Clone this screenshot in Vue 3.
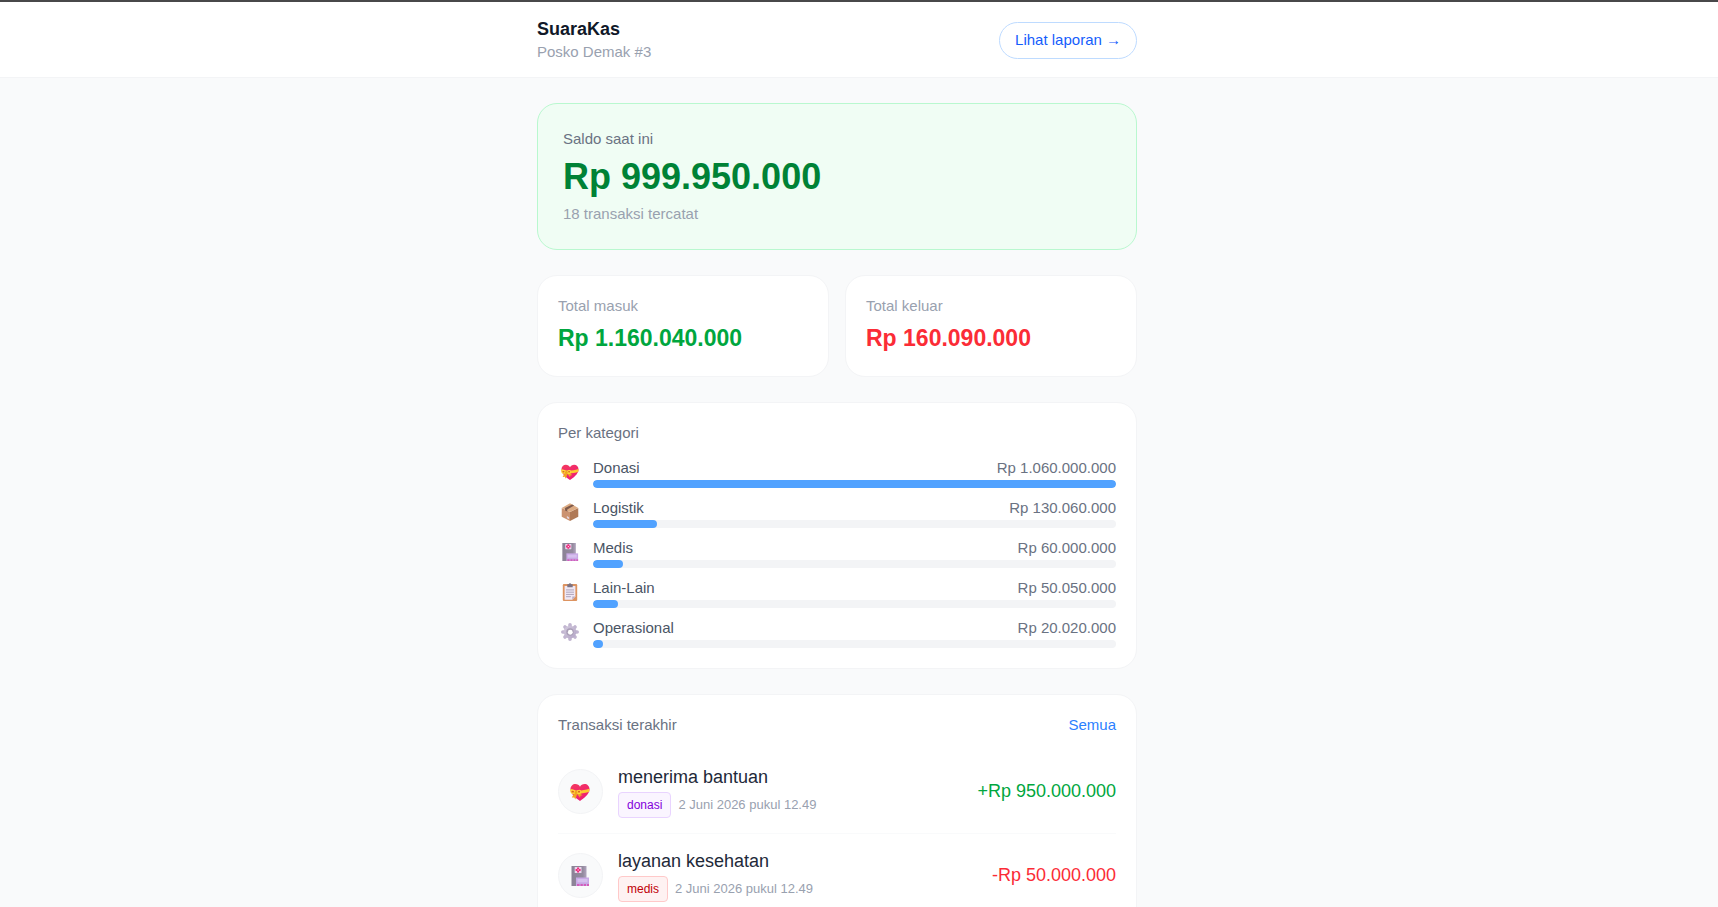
<script setup>
const categories = [
  { name: 'Donasi', icon: 'gift', amount: 1060000000 },
  { name: 'Logistik', icon: 'box', amount: 130060000 },
  { name: 'Medis', icon: 'hospital', amount: 60000000 },
  { name: 'Lain-Lain', icon: 'clipboard', amount: 50050000 },
  { name: 'Operasional', icon: 'gear', amount: 20020000 },
]
const largest = Math.max(...categories.map((c) => c.amount))

const transactions = [
  { title: 'menerima bantuan', tag: 'donasi', icon: 'gift', date: '2 Juni 2026 pukul 12.49', amount: 950000000 },
  { title: 'layanan kesehatan', tag: 'medis', icon: 'hospital', date: '2 Juni 2026 pukul 12.49', amount: -50000000 },
]

const rupiah = (n) => 'Rp ' + String(Math.abs(n)).replace(/\B(?=(\d{3})+$)/g, '.')
const signed = (n) => (n < 0 ? '-' : '+') + rupiah(n)
const share = (n) => (n / largest) * 100 + '%'
</script>

<template>
  <svg class="sprite" aria-hidden="true">
    <defs>
      <linearGradient id="heart-fill" x1="0" y1="0" x2="0.6" y2="1">
        <stop offset="0" stop-color="#f43a5e" />
        <stop offset="1" stop-color="#ee1c76" />
      </linearGradient>
      <linearGradient id="wall-fill" x1="0" y1="0" x2="1" y2="0">
        <stop offset="0" stop-color="#8b8296" />
        <stop offset="0.75" stop-color="#938a9e" />
        <stop offset="1" stop-color="#b0a5bd" />
      </linearGradient>
      <linearGradient id="gear-fill" x1="0" y1="0" x2="1" y2="1">
        <stop offset="0" stop-color="#d3cadd" />
        <stop offset="1" stop-color="#b3a5c6" />
      </linearGradient>
    </defs>
    <symbol id="gift" viewBox="0 0 20 20">
      <path d="M10 19C7 17 .5 12.500 .5 7.300C.5 4 2.800 2 5.400 2C7.500 2 9.200 3.100 10 4.700C10.800 3.100 12.500 2 14.600 2C17.200 2 19.500 4 19.500 7.300C19.500 12.500 13 17 10 19Z" fill="url(#heart-fill)" />
      <path d="M.5 7.300C6 9.300 13 8.800 19.400 6.800L19.300 9.800C14 11.800 6.500 12.300 1.300 10.600Z" fill="#fdc82f" />
      <path d="M4.500 10.500L1.800 15.500L4.300 15.400L5.300 17.400L7.200 12L10 15.800L10.600 13.600L12.600 13.500L8 9.500Z" fill="#f0a321" />
      <path d="M6 9.700C4 6.800 .3 6.600 .2 8.800C.2 12 3.300 13.200 6 10.800C8.500 13.200 11.300 12.400 11.300 9.700C11.200 7 7.800 7 6 9.700Z" fill="#ffd43e" />
      <ellipse cx="2.700" cy="9.700" rx="1.300" ry=".9" fill="#d86722" />
      <ellipse cx="9" cy="9.700" rx="1.200" ry=".9" fill="#d86722" />
      <circle cx="6" cy="10.400" r="1.400" fill="#eba51f" />
    </symbol>
    <symbol id="box" viewBox="0 0 20 20">
      <path d="M.8 5.500L10 10V20L.8 15.200Z" fill="#cb9270" />
      <path d="M19.200 5.500L10 10V20L19.200 15.200Z" fill="#b07a57" />
      <path d="M10 .2L19.200 5.500L10 10L.8 5.500Z" fill="#dcab83" />
      <path d="M4.500 5.600L12.300 1.600L14.600 2.900L7 7.100V9.500L4.500 8.200Z" fill="#7f5a4b" />
      <path d="M6.500 14.500L9 15.700V18L6.500 16.800Z" fill="#e5d4dc" />
    </symbol>
    <symbol id="hospital" viewBox="0 0 20 20">
      <rect x="1.500" y="0" width="15" height="20" fill="url(#wall-fill)" />
      <rect x="4.700" y="1" width="6.800" height="6" rx=".5" fill="#e9d6ec" />
      <path d="M7.100 1.400H9.100V2.900H10.600V5H9.100V6.500H7.100V5H5.600V2.900H7.100Z" fill="#ed287a" />
      <rect x="7.600" y="3.400" width="1.100" height="1.100" fill="#fff" />
      <rect x="6" y="11.500" width="13" height="8.500" fill="#c8a8e5" />
      <rect x="7.500" y="13" width="10" height="3.300" fill="#d6c0ee" />
      <path d="M7 18H9.500V20H7ZM10.500 18H12.800V20H10.500ZM13.800 18H16V20H13.800ZM17 18H19V20H17Z" fill="#d35cba" />
    </symbol>
    <symbol id="clipboard" viewBox="0 0 20 20">
      <rect x="2" y="1.200" width="16" height="18.800" rx="1.200" fill="#dd9461" />
      <path d="M4 3.200H16V15L12.500 18.500H4Z" fill="#efe8f5" />
      <path d="M16 15L12.500 18.500V15Z" fill="#bcaec8" />
      <path d="M7 1.300H8.500A1.600 1.600 0 0 1 11.500 1.300H13V4.800H7Z" fill="#7c7383" />
      <path d="M5.600 7.700H14.400M5.600 10.200H14.400M5.600 12.700H14.400M5.600 15.200H11" stroke="#a99db5" stroke-width="1" />
    </symbol>
    <symbol id="gear" viewBox="0 0 20 20">
      <g stroke="#c1b5d0" stroke-width="4" stroke-linecap="round">
        <path d="M10 2V18M2 10H18M4.400 4.400L15.600 15.600M15.600 4.400L4.400 15.600" />
      </g>
      <circle cx="10" cy="10" r="7" fill="url(#gear-fill)" />
      <circle cx="10" cy="10" r="4.100" fill="#a99eb6" />
      <circle cx="10.300" cy="10.300" r="2.700" fill="#fff" />
    </symbol>
  </svg>

  <div class="page">
    <header class="topbar">
      <div class="column topbar-row">
        <div>
          <h1 class="brand">SuaraKas</h1>
          <p class="muted">Posko Demak #3</p>
        </div>
        <a class="report" href="#laporan">Lihat laporan →</a>
      </div>
    </header>

    <main class="main">
      <div class="column stack">
        <section class="balance">
          <p class="label">Saldo saat ini</p>
          <p class="balance-value">{{ rupiah(999950000) }}</p>
          <p class="muted">18 transaksi tercatat</p>
        </section>

        <div class="totals">
          <section class="card">
            <p class="muted">Total masuk</p>
            <p class="total-value income">{{ rupiah(1160040000) }}</p>
          </section>
          <section class="card">
            <p class="muted">Total keluar</p>
            <p class="total-value expense">{{ rupiah(160090000) }}</p>
          </section>
        </div>

        <section class="card">
          <h2 class="label">Per kategori</h2>
          <ul class="category-list">
            <li v-for="c in categories" :key="c.name" class="category">
              <span class="category-icon">
                <svg class="icon-small" aria-hidden="true"><use :href="'#' + c.icon" /></svg>
              </span>
              <div class="category-body">
                <div class="category-line">
                  <span class="category-name">{{ c.name }}</span>
                  <span>{{ rupiah(c.amount) }}</span>
                </div>
                <div class="track"><div class="fill" :style="{ width: share(c.amount) }"></div></div>
              </div>
            </li>
          </ul>
        </section>

        <section class="card">
          <div class="card-head">
            <h2 class="label">Transaksi terakhir</h2>
            <a class="all" href="#transaksi">Semua</a>
          </div>
          <ul class="transactions">
            <li v-for="t in transactions" :key="t.title" class="transaction">
              <span class="avatar">
                <svg class="icon-large" aria-hidden="true"><use :href="'#' + t.icon" /></svg>
              </span>
              <div class="transaction-body">
                <p class="transaction-title">{{ t.title }}</p>
                <div class="meta">
                  <span class="tag" :class="t.tag">{{ t.tag }}</span>
                  <span class="date">{{ t.date }}</span>
                </div>
              </div>
              <span class="amount" :class="t.amount < 0 ? 'expense' : 'income'">{{ signed(t.amount) }}</span>
            </li>
          </ul>
        </section>
      </div>
    </main>
  </div>
</template>

<style>
body {
  margin: 0;
  background: #f9fafb;
}
</style>

<style scoped>
.sprite {
  position: absolute;
  width: 0;
  height: 0;
}
.page {
  min-height: 100vh;
  box-sizing: border-box;
  border-top: 2px solid #48484a;
  background: #f9fafb;
  color: #101828;
  font-family: "Liberation Sans", Arial, sans-serif;
  font-size: 15px;
  line-height: 20px;
}
h1, h2, p, ul {
  margin: 0;
  padding: 0;
  font-size: inherit;
  font-weight: 400;
  list-style: none;
}
a {
  text-decoration: none;
}
.column {
  max-width: 600px;
  margin: 0 auto;
}
.topbar {
  padding: 16px 60px 15px 16px;
  background: #fff;
  border-bottom: 1px solid #f3f4f6;
}
.topbar-row {
  display: flex;
  align-items: center;
  justify-content: space-between;
}
h1.brand {
  padding-bottom: 1px;
  font-size: 18px;
  font-weight: 700;
  line-height: 23px;
}
.muted {
  color: #99a1af;
}
.label {
  color: #6a7282;
}
.report {
  padding: 7px 15px 8px;
  border: 1px solid #bedbff;
  border-radius: 20px;
  color: #155dfc;
}
.main {
  padding: 25px 60px 25px 16px;
}
.stack {
  display: flex;
  flex-direction: column;
  gap: 25px;
}
.balance {
  padding: 25px;
  border: 1px solid #b9f8cf;
  border-radius: 20px;
  background: #f0fdf4;
}
.balance-value {
  margin: 7px 0 6px;
  color: #008236;
  font-size: 36px;
  font-weight: 700;
  line-height: 42px;
}
.totals {
  display: grid;
  grid-template-columns: 1fr 1fr;
  gap: 16px;
}
.card {
  padding: 20px;
  border: 1px solid #f3f4f6;
  border-radius: 20px;
  background: #fff;
}
.total-value {
  margin-top: 4px;
  font-size: 23px;
  font-weight: 700;
  line-height: 36px;
}
.income {
  color: #00a63e;
}
.expense {
  color: #fb2c36;
}
.category-list {
  display: flex;
  flex-direction: column;
  gap: 10px;
  margin-top: 15px;
}
.category {
  display: flex;
  align-items: center;
  gap: 12px;
}
.category-icon {
  display: flex;
  justify-content: center;
  width: 23px;
  padding-bottom: 2px;
}
.icon-small {
  width: 18px;
  height: 18px;
}
.category-body {
  flex: 1;
}
.category-line {
  display: flex;
  justify-content: space-between;
  padding-bottom: 2px;
  color: #6a7282;
}
.category-name {
  color: #4a5565;
}
.track {
  height: 8px;
  overflow: hidden;
  border-radius: 4px;
  background: #f3f4f6;
}
.fill {
  height: 8px;
  border-radius: 4px;
  background: #51a2ff;
}
.card-head {
  display: flex;
  justify-content: space-between;
}
.all {
  color: #2b7fff;
}
.transactions {
  margin-top: 15px;
}
.transaction {
  display: flex;
  align-items: center;
  gap: 15px;
  padding: 15px 0;
}
.transaction + .transaction {
  border-top: 1px solid #f9fafb;
}
.avatar {
  display: flex;
  align-items: center;
  justify-content: center;
  box-sizing: border-box;
  width: 45px;
  height: 45px;
  padding-right: 2px;
  border: 1px solid #f3f4f6;
  border-radius: 50%;
  background: #f9fafb;
}
.icon-large {
  width: 20px;
  height: 20px;
}
.transaction-body {
  flex: 1;
}
.transaction-title {
  color: #1e2939;
  font-size: 18px;
  line-height: 24px;
}
.meta {
  display: flex;
  align-items: center;
  gap: 7px;
  margin-top: 3px;
}
.tag {
  padding: 3px 8px;
  border: 1px solid;
  border-radius: 4px;
  font-size: 12px;
  line-height: 18px;
}
.donasi {
  border-color: #e9d4ff;
  background: #faf5ff;
  color: #8200db;
}
.medis {
  border-color: #ffc9c9;
  background: #fef2f2;
  color: #c10007;
}
.date {
  color: #99a1af;
  font-size: 13px;
}
.amount {
  font-size: 18px;
  line-height: 21px;
}
</style>
